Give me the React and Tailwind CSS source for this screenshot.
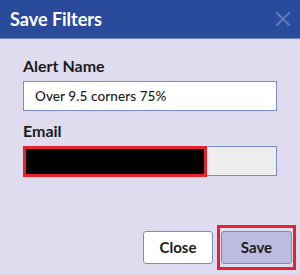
export default function App() {
  return (
    <div className="w-[300px] h-[275px] bg-[#dfdcf0] flex flex-col overflow-hidden" style={{ fontFamily: 'Lato, "Open Sans", sans-serif' }}>
      {/* Header */}
      <div className="h-[39px] bg-[#2a4a9b] border-b border-[#6f84c0] flex items-center justify-between pl-[10px] pr-[9px] shrink-0">
        <h2 className="text-white text-[18px] font-bold leading-none">Save Filters</h2>
        <svg width="16" height="16" viewBox="0 0 16 16" className="text-[#5f78b8]">
          <path d="M2 2 L14 14 M14 2 L2 14" stroke="currentColor" strokeWidth="2.2" strokeLinecap="round" />
        </svg>
      </div>

      {/* Body */}
      <div className="px-[23px] pt-[17px]">
        <label className="block text-[16px] font-bold text-[#1b1b1b] leading-[20px] mb-[5px]">Alert Name</label>
        <div className="h-[30px] bg-white border border-[#7b8bc7] flex items-center px-[11px] text-[13.5px] font-medium text-[#1b1b1b] tracking-[0.1px]">
          Over 9.5 corners 75%
        </div>

        <label className="block text-[16px] font-bold text-[#1b1b1b] leading-[20px] mt-[10px] mb-[5px]">Email</label>
        <div className="h-[30px] bg-[#eeeeee] border border-[#7b8bc7] flex">
          <div className="w-[184px] -ml-[1px] -mt-[1px] h-[31px] bg-black border-[3px] border-[#e8222b]" />
        </div>
      </div>

      {/* Footer */}
      <div className="mt-auto flex justify-end items-center gap-[4px] pr-[4px] pb-[5px]">
        <button className="w-[70px] h-[33px] bg-white border border-[#7b8bc7] rounded-[3px] text-[15px] font-bold text-[#1b1b1b]">Close</button>
        <div className="border-[3px] border-[#e8222b] px-[1px] py-[3px]">
          <button className="w-[71px] h-[33px] bg-[#bdbbe0] border border-[#7b8bc7] rounded-[3px] text-[15px] font-bold text-[#1b1b1b]">Save</button>
        </div>
      </div>
    </div>
  );
}
